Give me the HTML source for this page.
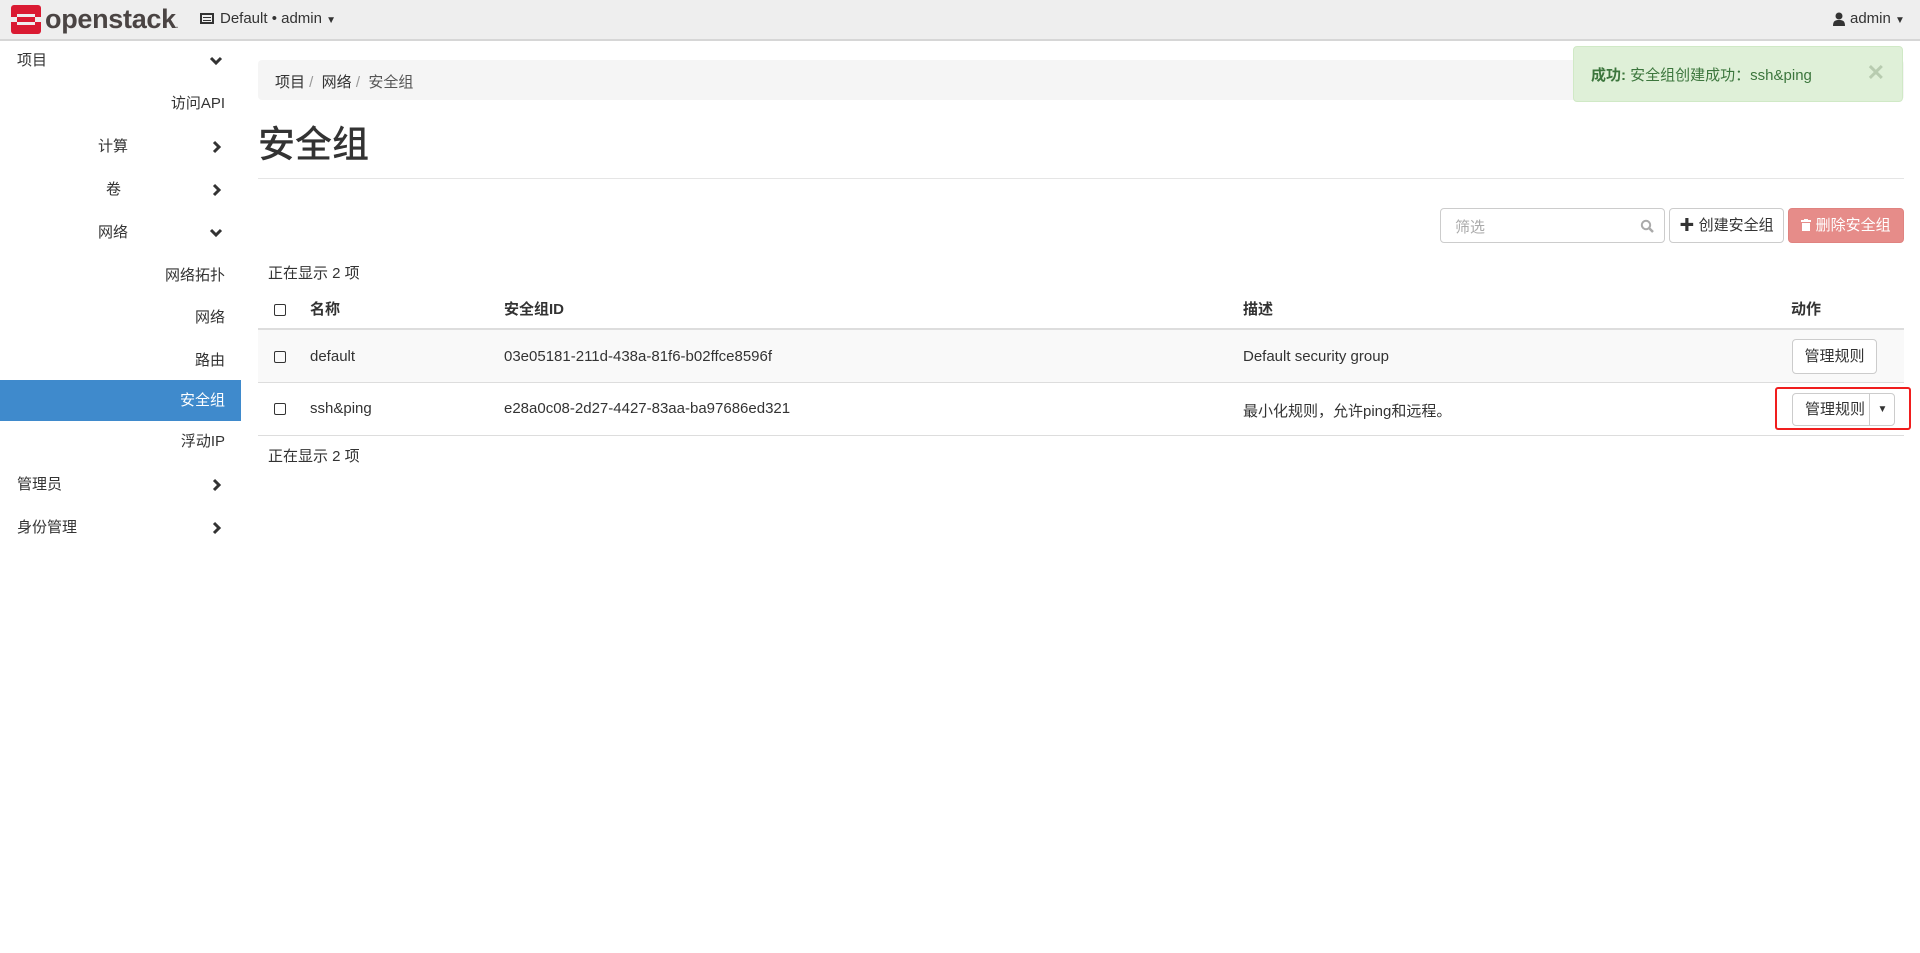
<!DOCTYPE html>
<html><head><meta charset="utf-8"><style>
*{box-sizing:border-box;margin:0;padding:0}
body{width:1920px;height:953px;overflow:hidden;background:#fff;font-family:"Liberation Sans","Noto Sans CJK SC",sans-serif;font-size:16px;color:#333;position:relative}
.nav{position:absolute;left:0;top:0;width:1920px;height:41px;background:#eee;border-bottom:2px solid #d6d6d6}
.si{position:absolute;height:42px;line-height:42px;width:241px;font-size:15px}
.chev{position:absolute;left:209px;top:15px}
.abs{position:absolute}
.btn{position:absolute;border:1px solid #ccc;border-radius:4px;background:#fff;font-size:15px;text-align:center}
.cb{position:absolute;width:12px;height:12px;border:1.5px solid #333;border-radius:2px}
</style></head><body>
<svg width="0" height="0" style="position:absolute"><defs>
<symbol id="dn" viewBox="0 0 14 12"><path d="M2 3l5 5 5-5" fill="none" stroke="#333" stroke-width="3"/></symbol>
<symbol id="rt" viewBox="0 0 12 14"><path d="M3 2l5 5-5 5" fill="none" stroke="#333" stroke-width="3"/></symbol>
</defs></svg>
<div class="nav">
 <svg class="abs" style="left:11px;top:5px" width="30" height="29" viewBox="0 0 30 29"><rect x="0" y="0" width="30" height="29" rx="3" fill="#da1a32"/><rect x="6" y="9" width="18" height="11" fill="#eee"/><rect x="0" y="12" width="30" height="5" fill="#da1a32"/><rect x="0" y="12" width="6" height="5" fill="#eee"/><rect x="24" y="12" width="6" height="5" fill="#eee"/></svg>
 <div class="abs" style="left:45px;top:4px;font-size:27px;color:#4a4443;font-weight:bold;letter-spacing:-0.3px">openstack<span style="font-size:8px">.</span></div>
 <div class="abs" style="left:200px;top:13px;width:14px;height:11px;border:2px solid #333"><div style="margin:2px 1px;height:1px;background:#333"></div><div style="margin:1px 1px;height:1px;background:#333"></div></div>
 <div class="abs" style="left:220px;top:10px;font-size:15px">Default • admin <span style="font-size:10px">▼</span></div>
 <svg class="abs" style="left:1833px;top:12px" width="12" height="14" viewBox="0 0 12 14"><circle cx="6" cy="4" r="3.5" fill="#333"/><path d="M0 14c0-5 2-6 6-6s6 1 6 6z" fill="#333"/></svg>
 <div class="abs" style="left:1850px;top:10px;font-size:15px">admin <span style="font-size:10px">▼</span></div>
</div>
<div class="si" style="top:40px;padding-left:17px">项目<svg class="chev" width="14" height="12"><use href="#dn"/></svg></div>
<div class="si" style="top:83px;text-align:right;padding-right:16px">访问API</div>
<div class="si" style="top:126px;padding-left:98px">计算<svg class="chev" style="left:211px;top:14px" width="12" height="14"><use href="#rt"/></svg></div>
<div class="si" style="top:169px;padding-left:106px">卷<svg class="chev" style="left:211px;top:14px" width="12" height="14"><use href="#rt"/></svg></div>
<div class="si" style="top:212px;padding-left:98px">网络<svg class="chev" width="14" height="12"><use href="#dn"/></svg></div>
<div class="si" style="top:255px;text-align:right;padding-right:16px">网络拓扑</div>
<div class="si" style="top:297px;text-align:right;padding-right:16px">网络</div>
<div class="si" style="top:340px;text-align:right;padding-right:16px">路由</div>
<div class="si" style="top:380px;height:41px;line-height:41px;background:#3f8acc;color:#fff;text-align:right;padding-right:16px">安全组</div>
<div class="si" style="top:421px;text-align:right;padding-right:16px">浮动IP</div>
<div class="si" style="top:464px;padding-left:17px">管理员<svg class="chev" style="left:211px;top:14px" width="12" height="14"><use href="#rt"/></svg></div>
<div class="si" style="top:507px;padding-left:17px">身份管理<svg class="chev" style="left:211px;top:14px" width="12" height="14"><use href="#rt"/></svg></div>
<div class="abs" style="left:258px;top:60px;width:1646px;height:40px;background:#f5f5f5;border-radius:4px;padding:11px 17px;font-size:15px">项目 <span style="color:#999">/</span>&nbsp; 网络 <span style="color:#999">/</span>&nbsp; <span style="color:#555">安全组</span></div>
<div class="abs" style="left:258px;top:114px;font-size:37px;font-weight:500">安全组</div>
<div class="abs" style="left:258px;top:178px;width:1646px;height:1px;background:#e5e5e5"></div>
<div class="btn" style="left:1440px;top:208px;width:225px;height:35px;color:#aaa;text-align:left;padding:7px 14px">筛选<svg class="abs" style="right:10px;top:10px" width="14" height="14" viewBox="0 0 14 14"><circle cx="6" cy="6" r="4.2" fill="none" stroke="#aaa" stroke-width="2"/><path d="M9 9l4 4" stroke="#aaa" stroke-width="2.5"/></svg></div>
<div class="btn" style="left:1669px;top:208px;width:115px;height:35px;line-height:33px;color:#333">✚ 创建安全组</div>
<div class="btn" style="left:1788px;top:208px;width:116px;height:35px;line-height:33px;background:#e68c89;border-color:#e08380;color:#fff"><svg width="10" height="12" viewBox="0 0 10 12" style="vertical-align:-1px"><rect x="0" y="1" width="10" height="2" fill="#fff"/><rect x="3" y="0" width="4" height="2" fill="#fff"/><rect x="1" y="4" width="8" height="8" fill="#fff"/></svg> 删除安全组</div>
<div class="abs" style="left:268px;top:262px;font-size:15px">正在显示 2 项</div>
<div class="abs" style="left:258px;top:328px;width:1646px;height:2px;background:#ddd"></div>
<div class="cb" style="left:274px;top:304px"></div>
<div class="abs" style="top:298px;left:310px;font-weight:bold;font-size:15px">名称</div>
<div class="abs" style="top:298px;left:504px;font-weight:bold;font-size:15px">安全组ID</div>
<div class="abs" style="top:298px;left:1243px;font-weight:bold;font-size:15px">描述</div>
<div class="abs" style="top:298px;left:1791px;font-weight:bold;font-size:15px">动作</div>
<div class="abs" style="left:258px;top:330px;width:1646px;height:53px;background:#f9f9f9;border-bottom:1px solid #ddd"></div>
<div class="cb" style="left:274px;top:351px"></div>
<div class="abs" style="top:348px;left:310px;font-size:15px">default</div>
<div class="abs" style="top:348px;left:504px;font-size:15px">03e05181-211d-438a-81f6-b02ffce8596f</div>
<div class="abs" style="top:348px;left:1243px;font-size:15px">Default security group</div>
<div class="btn" style="left:1792px;top:339px;width:85px;height:35px;line-height:33px">管理规则</div>
<div class="abs" style="left:258px;top:435px;width:1646px;height:1px;background:#ddd"></div>
<div class="cb" style="left:274px;top:403px"></div>
<div class="abs" style="top:400px;left:310px;font-size:15px">ssh&amp;ping</div>
<div class="abs" style="top:400px;left:504px;font-size:15px">e28a0c08-2d27-4427-83aa-ba97686ed321</div>
<div class="abs" style="top:400px;left:1243px;font-size:15px">最小化规则，允许ping和远程。</div>
<div class="abs" style="left:1775px;top:387px;width:136px;height:43px;border:2px solid #f01e1e;border-radius:3px"></div>
<div class="btn" style="left:1792px;top:393px;width:103px;height:33px;line-height:31px;text-align:left;padding-left:12px">管理规则<span class="abs" style="left:76px;top:0;height:31px;border-left:1px solid #ccc;width:26px;text-align:center;font-size:10px">▼</span></div>
<div class="abs" style="left:268px;top:445px;font-size:15px">正在显示 2 项</div>
<div class="abs" style="left:1573px;top:46px;width:330px;height:56px;background:#dff0d8;border:1px solid #d0e9c6;border-radius:4px;color:#3c763d;font-size:15px;padding:17px 17px"><b>成功:</b> 安全组创建成功：ssh&amp;ping<span class="abs" style="right:17px;top:13px;font-size:22px;color:#b8ccb0;font-weight:bold">✕</span></div>
</body></html>
